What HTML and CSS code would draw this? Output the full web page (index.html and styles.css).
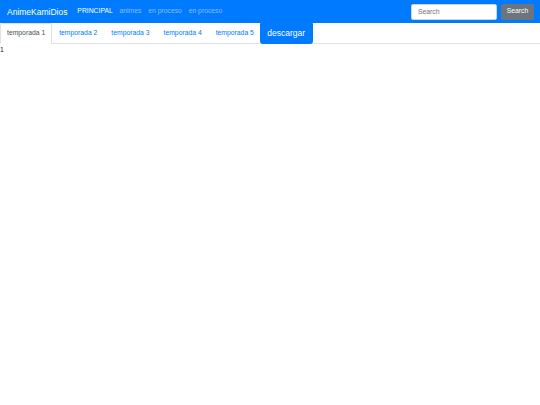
FILE: index.html
```html
<!DOCTYPE html>
<html lang="es">
<head>
<meta charset="utf-8">
<title>AnimeKamiDios</title>
<link rel="stylesheet" href="styles.css">
</head>
<body>
<nav class="navbar">
  <a class="brand" href="#">AnimeKamiDios</a>
  <ul class="menu">
    <li><a class="menu-link active" href="#">PRINCIPAL</a></li>
    <li><a class="menu-link" href="#">animes</a></li>
    <li><a class="menu-link" href="#">en proceso</a></li>
    <li><a class="menu-link" href="#">en proceso</a></li>
  </ul>
  <form class="search">
    <input class="search-input" type="search" placeholder="Search">
    <button class="search-btn" type="button">Search</button>
  </form>
</nav>
<div class="tabs">
  <a class="tab active" href="#">temporada 1</a>
  <a class="tab" href="#">temporada 2</a>
  <a class="tab" href="#">temporada 3</a>
  <a class="tab" href="#">temporada 4</a>
  <a class="tab" href="#">temporada 5</a>
  <button class="download" type="button">descargar</button>
</div>
<div class="content">1</div>
</body>
</html>
```
FILE: styles.css
```css
* { box-sizing: border-box; }
html, body { margin: 0; padding: 0; }
body {
  font-family: "Liberation Sans", Arial, sans-serif;
  font-size: 6.8px;
  line-height: 1.5;
  color: #212529;
  background: #fff;
}
a { text-decoration: none; }
.navbar {
  display: flex;
  align-items: center;
  height: 23px;
  padding: 0 6px 0 7px;
  background: #007bff;
}
.brand {
  color: #fff;
  font-size: 8.5px;
  line-height: 1.5;
  margin-right: 6.5px;
  padding: 1px 0 0;
}
.menu {
  display: flex;
  list-style: none;
  margin: 0;
  padding: 0;
  flex: 1;
}
.menu-link {
  display: block;
  padding: 0 3.4px;
  color: rgba(255,255,255,.5);
}
.menu-link.active { color: #fff; }
.search {
  display: flex;
  align-items: center;
  gap: 4px;
  margin: 0;
}
.search-input {
  width: 86px;
  height: 16px;
  padding: 0 6px;
  font: inherit;
  font-size: 6.8px;
  color: #495057;
  border: 1px solid #ced4da;
  border-radius: 2px;
  background: #fff;
  outline: none;
}
.search-input::placeholder { color: #6c757d; }
.search-btn {
  height: 16px;
  width: 33px;
  padding: 0;
  font: inherit;
  font-size: 6.8px;
  color: #fff;
  background: #6c757d;
  border: 1px solid #6c757d;
  border-radius: 2px;
}
.tabs {
  display: flex;
  align-items: flex-start;
  height: 21px;
  border-bottom: 1px solid #dee2e6;
}
.tab {
  display: block;
  padding: 3.6px 6px;
  border: 1px solid transparent;
  border-top-left-radius: 2px;
  border-top-right-radius: 2px;
  color: #007bff;
  line-height: 1.5;
}
.tab.active {
  color: #495057;
  background: #fff;
  border-color: #dee2e6 #dee2e6 #fff;
  height: 21px;
}
.download {
  margin-left: -1px;
  height: 21px;
  padding: 0 6.5px;
  font: inherit;
  font-size: 8.5px;
  color: #fff;
  background: #007bff;
  border: 1px solid #007bff;
  border-radius: 0 0 2.5px 2.5px;
}
.content { padding: 1px 0 0; }
```
